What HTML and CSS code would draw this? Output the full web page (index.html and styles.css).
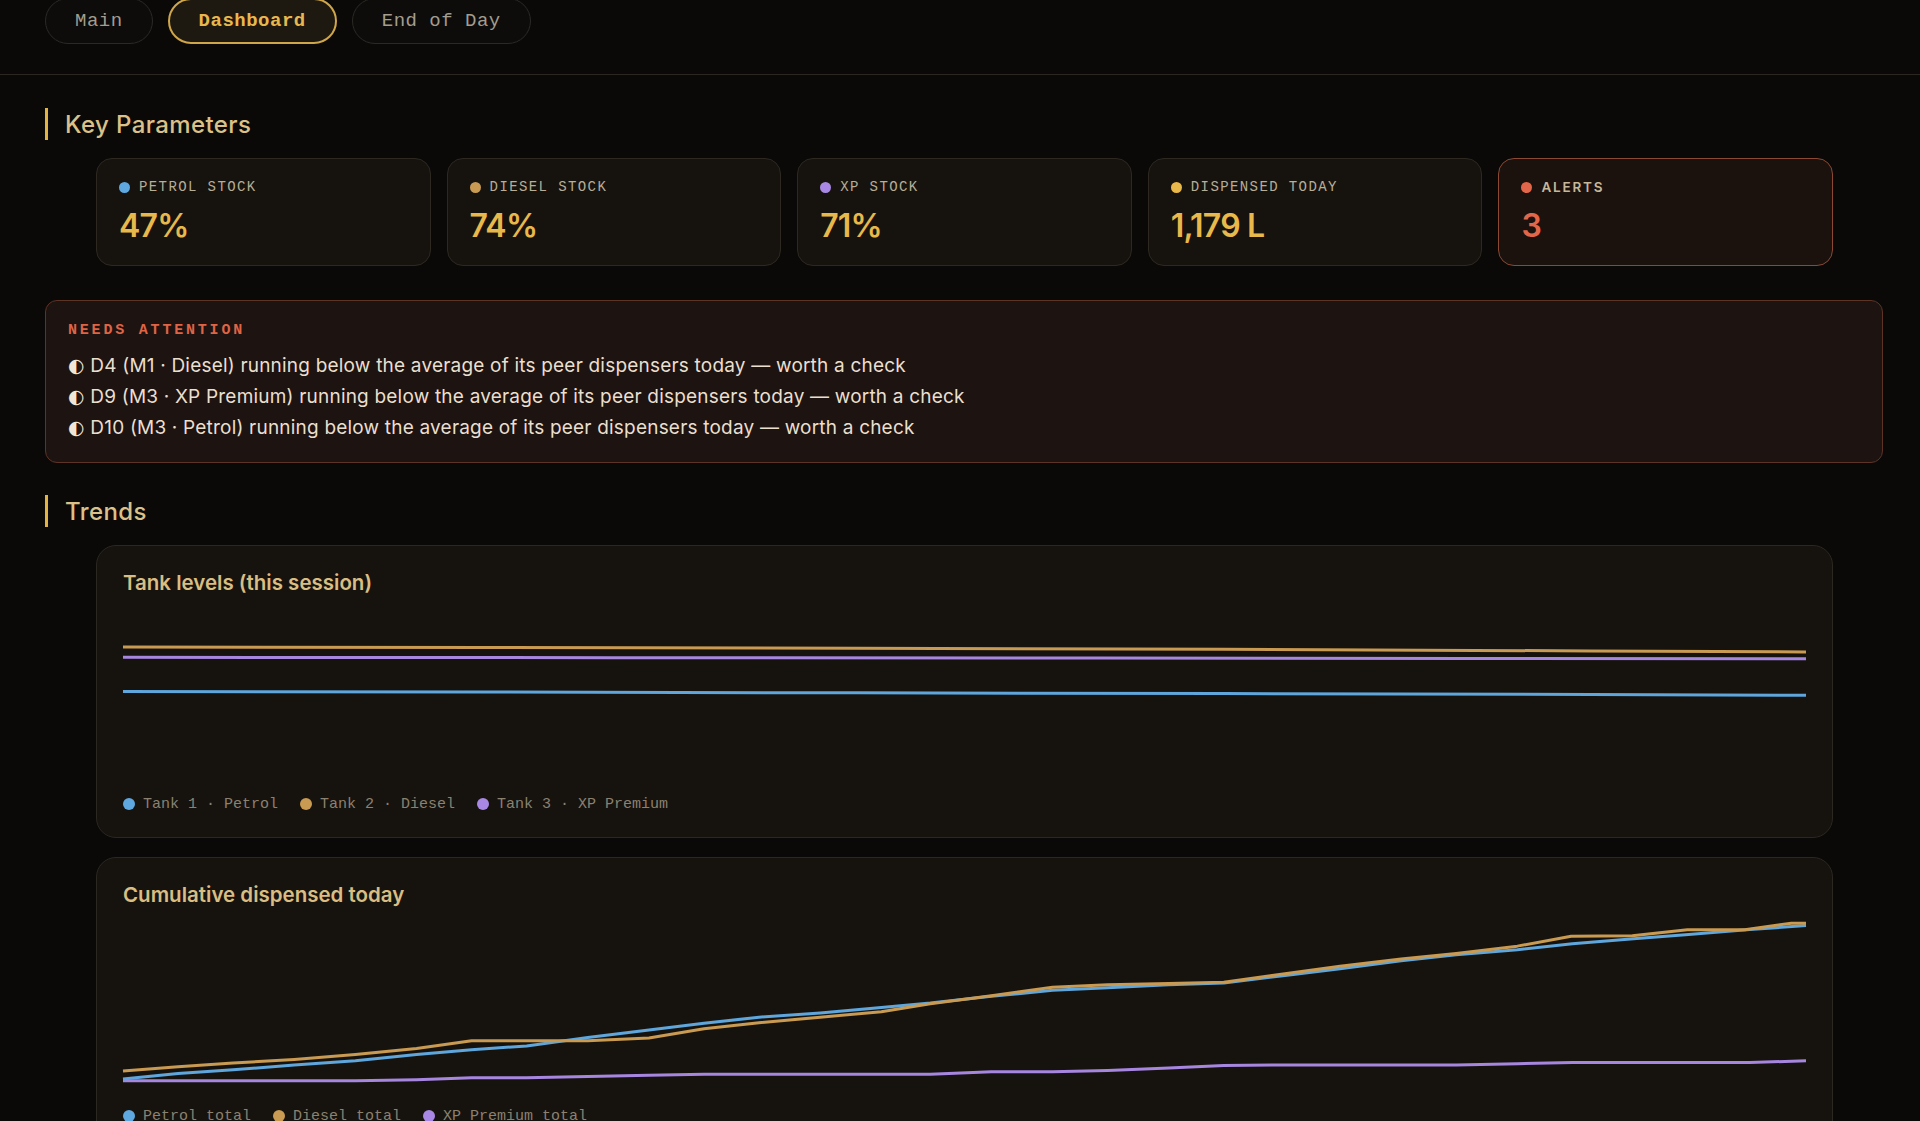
FILE: index.html
```html
<!DOCTYPE html>
<html lang="en">
<head>
<meta charset="utf-8">
<title>Dashboard</title>
<link rel="stylesheet" href="styles.css">
</head>
<body>
<header class="topbar">
  <nav class="tabs">
    <button class="tab">Main</button>
    <button class="tab tab-active">Dashboard</button>
    <button class="tab">End of Day</button>
  </nav>
</header>

<main class="page">
  <section class="section">
    <h2 class="section-title">Key Parameters</h2>
    <div class="kpis">
      <div class="kpi">
        <div class="kpi-label"><span class="dot dot-petrol"></span>PETROL STOCK</div>
        <div class="kpi-value">47%</div>
      </div>
      <div class="kpi">
        <div class="kpi-label"><span class="dot dot-diesel"></span>DIESEL STOCK</div>
        <div class="kpi-value">74%</div>
      </div>
      <div class="kpi">
        <div class="kpi-label"><span class="dot dot-xp"></span>XP STOCK</div>
        <div class="kpi-value">71%</div>
      </div>
      <div class="kpi">
        <div class="kpi-label"><span class="dot dot-gold"></span>DISPENSED TODAY</div>
        <div class="kpi-value">1,179 L</div>
      </div>
      <div class="kpi kpi-alert">
        <div class="kpi-label kpi-label-alert"><span class="dot dot-red"></span>ALERTS</div>
        <div class="kpi-value kpi-value-alert">3</div>
      </div>
    </div>

    <div class="attention">
      <div class="attention-title">NEEDS ATTENTION</div>
      <ul class="attention-list">
        <li><span class="half">◐</span> D4 (M1 · Diesel) running below the average of its peer dispensers today — worth a check</li>
        <li><span class="half">◐</span> D9 (M3 · XP Premium) running below the average of its peer dispensers today — worth a check</li>
        <li><span class="half">◐</span> D10 (M3 · Petrol) running below the average of its peer dispensers today — worth a check</li>
      </ul>
    </div>
  </section>

  <section class="section">
    <h2 class="section-title">Trends</h2>
    <div class="charts">
      <div class="chart-card">
        <h3 class="chart-title">Tank levels (this session)</h3>
        <svg class="chart" viewBox="100 498.2 1376 138.8" preserveAspectRatio="none">
          <polyline class="ln ln-diesel" points="100,527.6 400,528 700,528.6 1000,529.4 1300,530.8 1476,531.6"/>
          <polyline class="ln ln-xp" points="100,536 500,536.3 900,536.6 1200,536.9 1476,537.2"/>
          <polyline class="ln ln-petrol" points="100,564 400,564.4 700,565 1000,565.6 1300,566.3 1476,567"/>
        </svg>
        <div class="legend">
          <span class="legend-item"><span class="ldot dot-petrol"></span>Tank 1 · Petrol</span>
          <span class="legend-item"><span class="ldot dot-diesel"></span>Tank 2 · Diesel</span>
          <span class="legend-item"><span class="ldot dot-xp"></span>Tank 3 · XP Premium</span>
        </div>
      </div>

      <div class="chart-card">
        <h3 class="chart-title">Cumulative dispensed today</h3>
        <svg class="chart" viewBox="100 752.1 1376 138.8" preserveAspectRatio="none">
          <polyline class="ln ln-xp" points="100,881 145,881 190,881 240,881 290,881 340,880 385,878.5 430,878.5 480,877.5 530,876.5 575,875.5 620,875.5 670,875.5 720,875.5 760,875.5 810,873.5 860,873.5 905,872.5 955,870.5 1000,868.5 1050,868 1095,868 1145,868 1190,868 1240,867 1285,866 1335,866 1380,866 1430,866 1476,864.6"/>
          <polyline class="ln ln-petrol" points="100,879.5 145,875 190,872 240,868 290,864.5 340,859.5 385,855.5 430,852.5 480,845.5 530,839.5 575,834 620,829 670,825.5 720,821 760,817.5 810,812 860,807 905,805 955,802.5 1000,801 1050,795 1095,789.5 1145,783 1190,778 1240,774 1285,769 1335,765 1380,761.5 1430,757.5 1476,754.2"/>
          <polyline class="ln ln-diesel" points="100,873 145,869.5 190,866.5 240,863.5 290,859.5 340,854.5 385,848.3 430,848.3 480,848.3 530,846 575,838.5 620,833.5 670,829 720,824.5 760,818 810,811.5 860,804.5 905,802.5 955,801.5 1000,800.5 1050,793.5 1095,787.5 1145,781.5 1190,777 1240,771 1284,763 1334,762.5 1379,757.6 1426,757.6 1464,752.3 1476,752.3"/>
        </svg>
        <div class="legend">
          <span class="legend-item"><span class="ldot dot-petrol"></span>Petrol total</span>
          <span class="legend-item"><span class="ldot dot-diesel"></span>Diesel total</span>
          <span class="legend-item"><span class="ldot dot-xp"></span>XP Premium total</span>
        </div>
      </div>
    </div>
  </section>
</main>
</body>
</html>
```

FILE: styles.css
```css
* { box-sizing: border-box; }

html, body {
  margin: 0;
  padding: 0;
  background: #0a0908;
  color: #e8dccb;
  font-family: "Inter", "Noto Sans", sans-serif;
}

.topbar {
  padding: 0 0 30px 45px;
  border-bottom: 1px solid #2a2723;
}

.tabs {
  display: flex;
  gap: 15px;
  margin-top: -2px;
}

.tab {
  height: 46px;
  padding: 0 29px;
  border-radius: 23px;
  border: 1.5px solid #2c2925;
  background: #0d0c0a;
  color: #a39c8f;
  font-family: "Liberation Mono", "DejaVu Sans Mono", monospace;
  font-size: 19px;
  letter-spacing: 0.5px;
  cursor: pointer;
}

.tab-active {
  border: 2px solid #cfa64a;
  background: #1d1910;
  color: #e8b84e;
  font-weight: 700;
}

.page {
  padding: 33px 37px 0 45px;
}

.section {
  display: flex;
  flex-direction: column;
}

.section + .section {
  margin-top: 32px;
}

.section-title {
  margin: 0 0 18px 0;
  height: 32px;
  display: flex;
  align-items: center;
  border-left: 3px solid #e2b243;
  padding-left: 17px;
  font-size: 24px;
  font-weight: 500;
  color: #dbc189;
  letter-spacing: 0.4px;
}

.kpis {
  display: grid;
  grid-template-columns: repeat(5, 1fr);
  gap: 16px;
  padding: 0 50px 0 51px;
}

.kpi {
  background: #16130f;
  border: 1px solid #2d2921;
  border-radius: 16px;
  padding: 20px 22px 20px 22px;
}

.kpi-label {
  display: flex;
  align-items: center;
  gap: 9px;
  height: 16px;
  font-family: "Liberation Mono", "DejaVu Sans Mono", monospace;
  font-size: 14px;
  letter-spacing: 1.4px;
  color: #b8ad96;
}

.kpi-label-alert {
  font-family: "Inter", sans-serif;
  font-weight: 600;
  font-size: 13.5px;
  letter-spacing: 1.8px;
  color: #c6b79a;
}

.dot {
  width: 11px;
  height: 11px;
  border-radius: 50%;
  flex: none;
}

.dot-petrol { background: #5fa8df; }
.dot-diesel { background: #c99a52; }
.dot-xp { background: #a888e4; }
.dot-gold { background: #e8b84a; }
.dot-red { background: #e2674a; }

.kpi-value {
  margin-top: 12px;
  font-size: 32px;
  line-height: 38px;
  font-weight: 600;
  color: #e8b84a;
  letter-spacing: -0.8px;
}

.kpi-alert {
  background: #1b120e;
  border-color: #8b4832;
}

.kpi-value-alert {
  color: #e2674a;
}

.attention {
  margin-top: 34px;
  background: #1d1310;
  border: 1px solid #5d3325;
  border-radius: 12px;
  padding: 21px 22px 19px 22px;
}

.attention-title {
  height: 18px;
  line-height: 18px;
  font-family: "Liberation Mono", "DejaVu Sans Mono", monospace;
  font-weight: 700;
  font-size: 15px;
  letter-spacing: 2.8px;
  color: #df6446;
}

.attention-list {
  list-style: none;
  margin: 10px 0 0 0;
  padding: 0;
}

.attention-list li {
  height: 31px;
  line-height: 31px;
  font-size: 19px;
  letter-spacing: 0.2px;
  color: #eadfcf;
}

.half {
  font-family: "DejaVu Sans", sans-serif;
  font-size: 19px;
  color: #f0e6d8;
}

.charts {
  display: flex;
  flex-direction: column;
  gap: 19px;
  padding: 0 50px 0 51px;
}

.chart-card {
  background: #16130f;
  border: 1px solid #2b2721;
  border-radius: 20px;
  padding: 25px 26px 24px 26px;
}

.chart-title {
  margin: 0 0 16px 0;
  height: 24px;
  line-height: 24px;
  font-size: 20.5px;
  font-weight: 600;
  color: #d9bd82;
}

.chart {
  display: block;
  width: 100%;
  height: 170px;
  overflow: visible;
}

.ln {
  fill: none;
  stroke-width: 3;
  stroke-linejoin: round;
  vector-effect: non-scaling-stroke;
}

.ln-petrol { stroke: #5ea6dc; }
.ln-diesel { stroke: #c99a52; }
.ln-xp { stroke: #a786e0; }

.legend {
  margin-top: 14px;
  height: 18px;
  display: flex;
  align-items: center;
  gap: 22px;
  font-family: "Liberation Mono", "DejaVu Sans Mono", monospace;
  font-size: 15px;
  color: #8b8170;
}

.legend-item {
  display: flex;
  align-items: center;
  gap: 8px;
}

.ldot {
  width: 12px;
  height: 12px;
  border-radius: 50%;
}
```
